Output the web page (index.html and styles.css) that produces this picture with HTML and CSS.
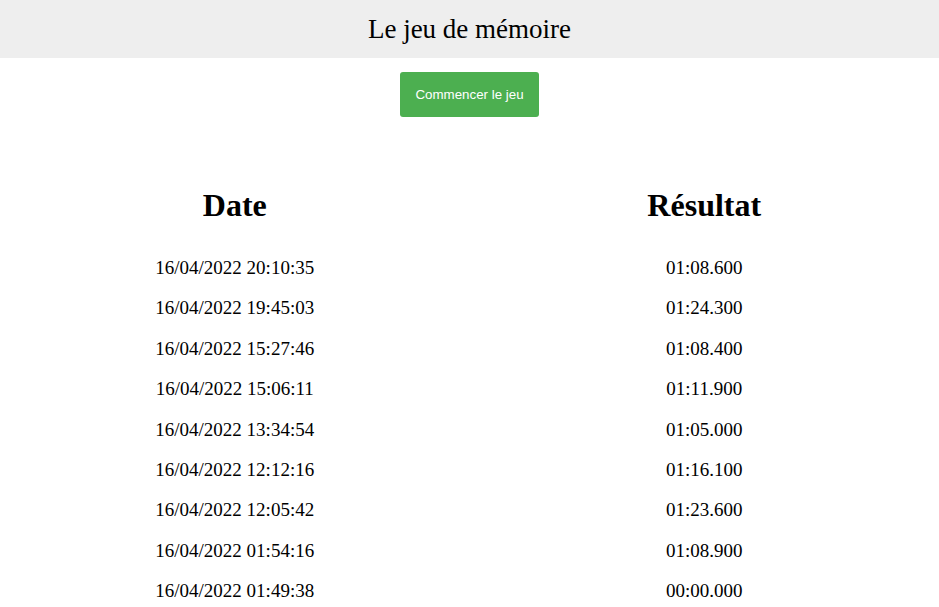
FILE: index.html
```html
<!DOCTYPE html>
<html lang="fr">
<head>
<meta charset="utf-8">
<title>Le jeu de mémoire</title>
<link rel="stylesheet" href="styles.css">
</head>
<body>
<header class="topbar">
  <h1 class="title">Le jeu de mémoire</h1>
</header>
<div class="actions">
  <button class="start-btn" type="button">Commencer le jeu</button>
</div>
<table class="scores">
  <thead>
    <tr><th>Date</th><th>Résultat</th></tr>
  </thead>
  <tbody>
    <tr><td>16/04/2022 20:10:35</td><td>01:08.600</td></tr>
    <tr><td>16/04/2022 19:45:03</td><td>01:24.300</td></tr>
    <tr><td>16/04/2022 15:27:46</td><td>01:08.400</td></tr>
    <tr><td>16/04/2022 15:06:11</td><td>01:11.900</td></tr>
    <tr><td>16/04/2022 13:34:54</td><td>01:05.000</td></tr>
    <tr><td>16/04/2022 12:12:16</td><td>01:16.100</td></tr>
    <tr><td>16/04/2022 12:05:42</td><td>01:23.600</td></tr>
    <tr><td>16/04/2022 01:54:16</td><td>01:08.900</td></tr>
    <tr><td>16/04/2022 01:49:38</td><td>00:00.000</td></tr>
  </tbody>
</table>
</body>
</html>
```
FILE: styles.css
```css
html, body {
  margin: 0;
  padding: 0;
  background: #fff;
  font-family: "Liberation Serif", "Times New Roman", serif;
  color: #000;
}
.topbar {
  background: #eeeeee;
  height: 58px;
}
.title {
  margin: 0;
  font-size: 27px;
  font-weight: normal;
  line-height: 58px;
  text-align: center;
}
.actions {
  display: flex;
  justify-content: center;
  padding-top: 14px;
}
.start-btn {
  background: #4caf50;
  color: #fff;
  border: none;
  border-radius: 3px;
  font-family: "Liberation Sans", Arial, sans-serif;
  font-size: 13.33px;
  font-weight: normal;
  width: 139px;
  height: 45px;
  padding: 0;
  cursor: pointer;
}
.scores {
  width: 100%;
  border-collapse: collapse;
  margin-top: 70px;
  table-layout: fixed;
}
.scores th {
  font-size: 32px;
  font-weight: bold;
  line-height: 37px;
  padding: 0 0 24px;
  text-align: center;
}
.scores td {
  font-size: 19px;
  line-height: 40.4px;
  padding: 0;
  text-align: center;
}
```
